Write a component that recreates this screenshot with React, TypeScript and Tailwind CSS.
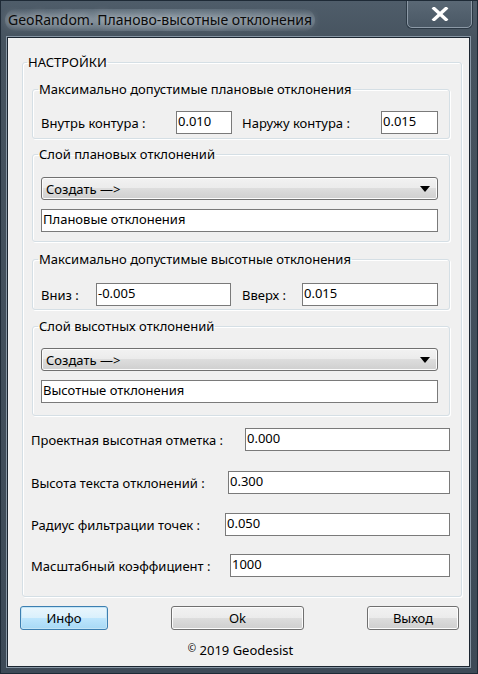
import React from "react";

function TextBox({ value, className = "" }: { value: string; className?: string }) {
  return (
    <div
      className={`h-[23px] bg-white border border-[#7a7a7a] pl-[1px] leading-[18px] text-[13px] text-black whitespace-nowrap overflow-hidden ${className}`}
    >
      {value}
    </div>
  );
}

function Combo() {
  return (
    <div className="h-[23px] rounded-[3px] border border-[#707070] bg-[linear-gradient(180deg,#f2f2f2_0%,#ebebeb_50%,#dddddd_50%,#cfcfcf_100%)] flex items-center justify-between pl-[4px] pr-[7px] shadow-[inset_0_0_0_1px_#fcfcfc]">
      <span className="leading-[16px]">Создать —&gt;</span>
      <svg width="10" height="6" viewBox="0 0 10 6">
        <path d="M0 0H10L5 6Z" fill="#000" />
      </svg>
    </div>
  );
}

function Group({
  title,
  className = "",
  children,
}: {
  title: string;
  className?: string;
  children: React.ReactNode;
}) {
  return (
    <fieldset
      className={`border border-[#d5dfe5] rounded-[3px] shadow-[inset_1px_1px_0_#ffffff,1px_1px_0_#ffffff] ${className}`}
    >
      <legend className="-ml-[3px] px-[1px] text-[13px] leading-[16px]">{title}</legend>
      {children}
    </fieldset>
  );
}

function Button({
  label,
  className = "",
  focused = false,
}: {
  label: string;
  className?: string;
  focused?: boolean;
}) {
  const style = focused
    ? "border-[#3c7fb1] bg-[linear-gradient(180deg,#eaf6fd_0%,#d9f0fc_50%,#bee6fd_50%,#a7d9f5_100%)] shadow-[inset_0_0_0_1px_#c4e5f6]"
    : "border-[#707070] bg-[linear-gradient(180deg,#f2f2f2_0%,#ebebeb_50%,#dddddd_50%,#cfcfcf_100%)] shadow-[inset_0_0_0_1px_#fcfcfc]";
  return (
    <div
      className={`h-[24px] rounded-[3px] border flex items-center justify-center text-[13px] leading-[16px] ${style} ${className}`}
    >
      {label}
    </div>
  );
}

export default function App() {
  return (
    <div className="w-[478px] h-[674px] bg-[linear-gradient(180deg,#4f5d6a_0px,#46535f_40px,#3d4a57_100%)] border border-[#1e2a36] flex flex-col font-['Noto_Sans',sans-serif] text-[13px] text-black overflow-hidden">
      {/* Title bar */}
      <div className="h-[36px] flex items-start justify-between">
        <div className="mt-[8px] ml-[4px] px-[3px] rounded-[12px] bg-[radial-gradient(ellipse_at_center,rgba(190,205,215,0.5)_0%,rgba(170,185,197,0.3)_60%,rgba(120,135,148,0)_100%)]">
          <span className="text-[14px] leading-[22px] text-[#0b0b0b] [text-shadow:0_0_8px_rgba(255,255,255,0.9)] whitespace-nowrap">
            GeoRandom. Планово-высотные отклонения
          </span>
        </div>
        <div className="mr-[5px] -mt-[1px] w-[65px] h-[28px] rounded-b-[5px] border border-[#8d9aa7] bg-[linear-gradient(180deg,#5a6875_0%,#4a5865_100%)] shadow-[0_0_0_1px_#2c3945] flex items-center justify-center">
          <svg width="18" height="14" viewBox="0 0 18 14">
            <path
              d="M3 1.5L15 12.5M15 1.5L3 12.5"
              stroke="#ffffff"
              strokeWidth="3.4"
              strokeLinecap="square"
            />
          </svg>
        </div>
      </div>

      {/* Client area */}
      <div className="ml-[6px] w-[463px] h-[630px] border border-[#1b2530] shadow-[0_0_0_1px_#8796a4]">
        <div className="w-full h-full bg-[#f0f0f0] flex flex-col pl-[12px] pr-[8px]">
          <fieldset className="mt-[16px] ml-[2px] border border-[#d5dfe5] rounded-[3px] shadow-[inset_1px_1px_0_#ffffff,1px_1px_0_#ffffff] pl-[9px] pr-[11px] pb-[19px]">
            <legend className="-ml-[5px] px-[1px] text-[13px] leading-[16px]">НАСТРОЙКИ</legend>

            <Group title="Максимально допустимые плановые отклонения" className="mt-[11px] pl-[8px] pr-[10px] pt-[14px] pb-[4px]">
              <div className="flex items-center">
                <span className="w-[135px] pt-[2px]">Внутрь контура :</span>
                <TextBox value="0.010" className="w-[56px]" />
                <span className="ml-[10px] w-[139px] pt-[2px]">Наружу контура :</span>
                <TextBox value="0.015" className="w-[57px]" />
              </div>
            </Group>

            <Group title="Слой плановых отклонений" className="mt-[7px] pl-[8px] pr-[11px] pt-[15px] pb-[9px]">
              <Combo />
              <TextBox value="Плановые отклонения" className="mt-[9px]" />
            </Group>

            <Group title="Максимально допустимые высотные отклонения" className="mt-[9px] pl-[8px] pr-[11px] pt-[16px] pb-[3px]">
              <div className="flex items-center">
                <span className="w-[55px] pt-[2px]">Вниз :</span>
                <TextBox value="-0.005" className="w-[135px]" />
                <span className="ml-[11px] w-[60px] pt-[2px]">Вверх :</span>
                <TextBox value="0.015" className="w-[136px]" />
              </div>
            </Group>

            <Group title="Слой высотных отклонений" className="mt-[8px] pl-[8px] pr-[11px] pt-[14px] pb-[12px]">
              <Combo />
              <TextBox value="Высотные отклонения" className="mt-[9px]" />
            </Group>

            <div className="mt-[12px] flex items-center -ml-[1px]">
              <span className="w-[214px] pt-[2px]">Проектная высотная отметка :</span>
              <TextBox value="0.000" className="flex-1" />
            </div>
            <div className="mt-[20px] flex items-center -ml-[1px]">
              <span className="w-[197px] pt-[2px]">Высота текста отклонений :</span>
              <TextBox value="0.300" className="flex-1" />
            </div>
            <div className="mt-[19px] flex items-center -ml-[1px]">
              <span className="w-[194px] pt-[2px]">Радиус фильтрации точек :</span>
              <TextBox value="0.050" className="flex-1" />
            </div>
            <div className="mt-[18px] flex items-center -ml-[1px]">
              <span className="w-[199px] pt-[2px]">Масштабный коэффициент :</span>
              <TextBox value="1000" className="flex-1" />
            </div>
          </fieldset>

          <div className="mt-[9px] flex justify-between pr-[2px]">
            <Button label="Инфо" focused className="w-[88px]" />
            <Button label="Ok" className="w-[133px]" />
            <Button label="Выход" className="w-[92px]" />
          </div>

          <div className="mt-[10px] text-center leading-[16px]">
            <span className="text-[10px] align-[3px]">©</span> 2019 Geodesist
          </div>
        </div>
      </div>
    </div>
  );
}
